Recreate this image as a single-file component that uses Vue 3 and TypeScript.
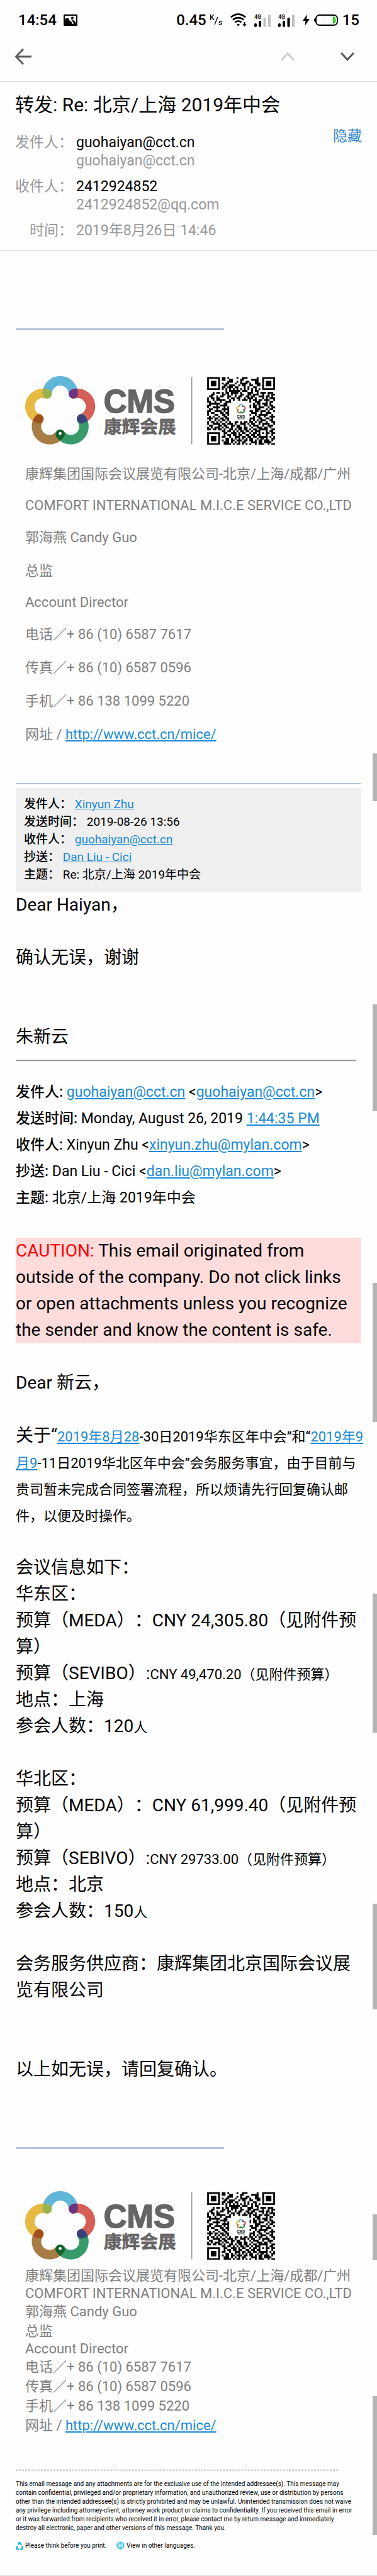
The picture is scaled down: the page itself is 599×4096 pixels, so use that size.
<script setup lang="ts">
interface SignatureLine {
  text: string
  latin?: boolean
  link?: string
}

const signature: SignatureLine[] = [
  { text: '康辉集团国际会议展览有限公司-北京/上海/成都/广州' },
  { text: 'COMFORT INTERNATIONAL M.I.C.E SERVICE CO.,LTD', latin: true },
  { text: '郭海燕 Candy Guo' },
  { text: '总监' },
  { text: 'Account Director', latin: true },
  { text: '电话／+ 86 (10) 6587 7617' },
  { text: '传真／+ 86 (10) 6587 0596' },
  { text: '手机／+ 86 138 1099 5220' },
  { text: '网址 / ', link: 'http://www.cct.cn/mice/' },
]

const petals = ['#61b5d8', '#d55f56', '#379a6a', '#a87c45', '#e7ba43']
const overlaps = ['#6a347f', '#39427b', '#0f642c', '#a0501f', '#9ab351']

const codeRows: string[] = [
  '1111111011010000100111000001001111111',
  '1000001011001100001100001111001000001',
  '1011101000011100101001100011001011101',
  '1011101010110001001111010011101011101',
  '1011101001101110010110011001101011101',
  '1000001011011101100010100110001000001',
  '1111111010101010101010101010101111111',
  '0000000000101111110111001011000000000',
  '0001011010110111101000111001011101110',
  '0011000011010101001100110111001001011',
  '0110010110011001011001101100111011010',
  '1011011000010110110010111010001010111',
  '1001011111001010010111010110110111001',
  '1100100100111000000000010011100010110',
  '0111111001100000000000000101101110100',
  '1100010111100000000000010110100110110',
  '1001111001010000000000010110111001011',
  '0110010011110000000000000011100010110',
  '1100111101010000000000011011011101001',
  '1011000110110000000000001110010011100',
  '1000110011010000000000010010111110010',
  '0101001001100000000000000101100100111',
  '1110110110110000000000011100110011010',
  '0100101011010000000000010101011100110',
  '1011010100101001101011011010110010011',
  '1001111011011101001110101100101111001',
  '0110001101100110110010010111001001110',
  '1010111010110100111011001001110110100',
  '1101101101001101011011010110111110011',
  '0000000011011010101101101011100010110',
  '1111111001100111010110010110101011011',
  '1000001001011011011001101101100010010',
  '1011101011001001110110110110111110101',
  '1011101000110101010101011001011010011',
  '1011101010110110111011011010110111010',
  '1000001001110101010110001110110111100',
  '1111111001111010110101010010111001011',
]

const codePath = codeRows
  .map((row, y) =>
    Array.from(row.matchAll(/1+/g))
      .map((run) => `M${run.index} ${y}h${run[0].length}v1h-${run[0].length}z`)
      .join(''),
  )
  .join('')

const scrollMarks = [
  { top: 1198, height: 76 },
  { top: 1597, height: 170 },
  { top: 2040, height: 221 },
  { top: 2534, height: 221 },
  { top: 3027, height: 168 },
  { top: 3521, height: 73 },
  { top: 3810, height: 221 },
]
</script>

<template>
  <div class="page">
    <svg class="defs" width="0" height="0" aria-hidden="true">
      <defs>
        <path id="arc" d="M-37.6 -52A37.6 37.6 0 0 1 37.6 -52" fill="none" stroke-width="27" stroke-linecap="round" />
        <mask v-for="n in 5" :id="`petal-mask-${n}`" :key="n" maskUnits="userSpaceOnUse" x="-110" y="-110" width="220" height="220">
          <use href="#arc" stroke="#fff" :transform="`rotate(${72 * n})`" />
        </mask>
        <g id="flower">
          <use v-for="(c, i) in petals" :key="c" href="#arc" :stroke="c" :transform="`rotate(${72 * i})`" />
          <g v-for="(c, i) in overlaps" :key="c" :mask="`url(#petal-mask-${i + 1})`">
            <use href="#arc" :stroke="c" :transform="`rotate(${72 * i})`" />
          </g>
          <ellipse cx="0" cy="62" rx="4" ry="4.5" fill="#fff" />
        </g>
        <g id="banner">
          <use href="#flower" transform="translate(100 103)" />
          <g fill="#676465" stroke="#676465" stroke-linejoin="round">
            <text x="225" y="105" class="brand" stroke-width="3">CMS</text>
            <text x="225" y="165" class="brand-cn" stroke-width="1">康辉会展</text>
          </g>
          <path d="M478 3V196" stroke="#777" stroke-width="2" />
          <g transform="translate(522 3) scale(5.27)">
            <path :d="codePath" fill="#060203" />
            <rect x="13.5" y="13.7" width="9.6" height="10" rx="1" fill="#fff" />
            <use href="#flower" transform="translate(18.4 17.3) scale(.0265)" />
            <text x="18.4" y="21.9" class="mini" text-anchor="middle">CMS</text>
            <text x="18.4" y="23" class="mini-cn" text-anchor="middle">康辉会展</text>
          </g>
        </g>
      </defs>
    </svg>

    <div class="status">
      <span>14:54</span>
      <svg class="picture" viewBox="0 0 22 18" width="22" height="18">
        <rect width="22" height="18" rx="1.5" />
        <path d="M2 2H20V14C17 8 13 8 10 8C7 5 4 5 2 8Z" fill="#fff" />
        <path d="M9 8C12 9 14 11 15 15" fill="none" stroke="#fff" stroke-width="2" />
        <circle cx="14" cy="5.5" r="2" />
      </svg>
      <div class="status-right">
        <span>0.45</span>
        <svg class="rate" viewBox="0 -6 21 30" width="21" height="30">
          <text x="0" y="9">K</text>
          <path d="M8 16L13 4" stroke="#000" stroke-width="1.4" />
          <text x="14" y="17">s</text>
        </svg>
        <svg class="wifi" viewBox="0 0 26 22" width="26" height="22">
          <g fill="none" stroke="#000" stroke-width="2.6">
            <path d="M1 6.5C8 0 17 0 24 6.5" />
            <path d="M4 10.5C9 6 16 6 21 10.5" />
            <path d="M7.500 14.500C10.500 12 14.500 12 17.500 14.500" />
          </g>
          <path d="M10 17.500Q12.500 16 15 17.500L12.500 21Z" />
          <path d="M21.500 14H23.500V17.500H26L22.500 21L19 17.500H21.500Z" />
        </svg>
        <svg v-for="bars in [2, 3]" :key="bars" class="signal" viewBox="0 -4 26 29" width="26" height="29">
          <text x="0" y="8">4G</text>
          <rect x="0" y="15" width="4" height="6" rx="2" />
          <rect x="7" y="11" width="4" height="10" rx="2" />
          <rect x="14.500" y="6" width="4" height="15" rx="2" :fill="bars > 2 ? '#000' : '#bfbfbf'" />
          <rect x="22" y="1" width="4" height="20" rx="2" fill="#bfbfbf" />
        </svg>
        <svg class="bolt" viewBox="0 0 11 18" width="11" height="18"><path d="M7 0L0 10H4.500L3.500 18L11 7H6Z" /></svg>
        <svg class="battery" viewBox="0 0 38 18" width="38" height="18">
          <rect x="3" y="1" width="34" height="16" rx="5.500" fill="none" stroke="#000" stroke-width="2" />
          <path d="M2.500 6Q0 6 0 9T2.500 12Z" />
          <path d="M30 3.500H31.500Q34.500 4 34.500 9T31.500 14.500H30Z" fill="#24d615" />
        </svg>
        <span>15</span>
      </div>
    </div>

    <nav class="toolbar">
      <button type="button" aria-label="返回">
        <svg viewBox="0 0 28 28" width="28" height="28"><path d="M14 2L2.500 14L14 26M3 14H27" fill="none" stroke="#5c5c5c" stroke-width="3" /></svg>
      </button>
      <button type="button" class="previous" aria-label="上一封" disabled>
        <svg viewBox="0 0 24 16" width="24" height="16"><path d="M2 14L12 3L22 14" fill="none" stroke="#cdcdcd" stroke-width="3" /></svg>
      </button>
      <button type="button" aria-label="下一封">
        <svg viewBox="0 0 24 16" width="24" height="16"><path d="M2 2L12 13L22 2" fill="none" stroke="#5c5c5c" stroke-width="3" /></svg>
      </button>
    </nav>

    <header class="heading">
      <h1>转发: Re: 北京/上海 2019年中会</h1>
      <div class="details">
        <dl>
          <dt>发件人：</dt>
          <dd><b>guohaiyan@cct.cn</b>guohaiyan@cct.cn</dd>
          <dt>收件人：</dt>
          <dd><b>2412924852</b>2412924852@qq.com</dd>
          <dt>时间：</dt>
          <dd>2019年8月26日 14:46</dd>
        </dl>
        <button type="button" class="hide">隐藏</button>
      </div>
    </header>

    <main>
      <hr class="accent first" />
      <section class="signature roomy">
        <svg class="banner" viewBox="0 0 720 197" role="img" aria-label="CMS 康辉会展"><use href="#banner" /></svg>
        <p v-for="line in signature" :key="line.text" :class="{ latin: line.latin }">
          {{ line.text }}<a v-if="line.link" :href="line.link">{{ line.link }}</a>
        </p>
      </section>

      <hr class="accent wide" />
      <section class="quoted">
        <p><b>发件人：</b> <a href="mailto:xinyun.zhu@mylan.com">Xinyun Zhu</a></p>
        <p><b>发送时间：</b> 2019-08-26 13:56</p>
        <p><b>收件人：</b> <a href="mailto:guohaiyan@cct.cn">guohaiyan@cct.cn</a></p>
        <p><b>抄送：</b> <a href="mailto:dan.liu@mylan.com">Dan Liu - Cici</a></p>
        <p><b>主题：</b> Re: 北京/上海 2019年中会</p>
      </section>

      <p>Dear Haiyan，</p>
      <p class="after-line">确认无误，谢谢</p>
      <p class="after-two">朱新云</p>
      <hr class="inset" />

      <section class="mail-info">
        <p><b>发件人:</b> <a href="mailto:guohaiyan@cct.cn">guohaiyan@cct.cn</a> &lt;<a href="mailto:guohaiyan@cct.cn">guohaiyan@cct.cn</a>&gt;</p>
        <p><b>发送时间:</b> Monday, August 26, 2019 <a href="#time">1:44:35 PM</a></p>
        <p><b>收件人:</b> Xinyun Zhu &lt;<a href="mailto:xinyun.zhu@mylan.com">xinyun.zhu@mylan.com</a>&gt;</p>
        <p><b>抄送:</b> Dan Liu - Cici &lt;<a href="mailto:dan.liu@mylan.com">dan.liu@mylan.com</a>&gt;</p>
        <p><b>主题:</b> 北京/上海 2019年中会</p>
      </section>

      <p class="caution after-line"><span>CAUTION:</span> This email originated from outside of the company. Do not click links or open attachments unless you recognize the sender and know the content is safe.</p>

      <p class="after-line">Dear 新云，</p>
      <p class="after-line request">关于“<span class="small"><a href="#east">2019年8月28</a>-30日2019华东区年中会”和“<a href="#north">2019年9月9</a>-11日2019华北区年中会”会务服务事宜，由于目前与贵司暂未完成合同签署流程，所以烦请先行回复确认邮件，以便及时操作。</span></p>

      <p class="after-line">会议信息如下：</p>
      <p>华东区：</p>
      <p>预算（MEDA）：CNY 24,305.80（见附件预算）</p>
      <p>预算（SEVIBO）:<span class="small">CNY 49,470.20（见附件预算）</span></p>
      <p>地点：上海</p>
      <p>参会人数：120<span class="small">人</span></p>

      <p class="after-line">华北区：</p>
      <p>预算（MEDA）：CNY 61,999.40（见附件预算）</p>
      <p>预算（SEBIVO）:<span class="small">CNY 29733.00（见附件预算）</span></p>
      <p>地点：北京</p>
      <p>参会人数：150<span class="small">人</span></p>

      <p class="after-line">会务服务供应商：康辉集团北京国际会议展览有限公司</p>
      <p class="after-two">以上如无误，请回复确认。</p>

      <hr class="accent second" />
      <section class="signature">
        <svg class="banner" viewBox="0 0 720 197" role="img" aria-label="CMS 康辉会展"><use href="#banner" /></svg>
        <p v-for="line in signature" :key="line.text" :class="{ latin: line.latin }">
          {{ line.text }}<a v-if="line.link" :href="line.link">{{ line.link }}</a>
        </p>
      </section>

      <footer class="legal">
        <hr />
        <p>
          This email message and any attachments are for the exclusive use of the intended addressee(s). This message may<br />
          contain confidential, privileged and/or proprietary information, and unauthorized review, use or distribution by persons<br />
          other than the intended addressee(s) is strictly prohibited and may be unlawful. Unintended transmission does not waive<br />
          any privilege including attorney-client, attorney work product or claims to confidentiality. If you received this email in error<br />
          or it was forwarded from recipients who received it in error, please contact me by return message and immediately<br />
          destroy all electronic, paper and other versions of this message. Thank you.
        </p>
        <div class="notes">
          <svg viewBox="0 0 24 26" width="12" height="13" fill="none" stroke="#20b4dc" stroke-width="5">
            <path d="M7 8L10 3H14L18 9M19 13L22 19L19 23H14M10 23H5L2 19L6 13" />
          </svg>
          <span>Please think before you print.</span>
          <svg class="globe" viewBox="0 0 26 28" width="13" height="14">
            <path d="M13 1A12 12 0 1 1 10 25L15 28V24" fill="#35bfe3" />
            <circle cx="13" cy="13" r="12" fill="#35bfe3" />
            <g fill="none" stroke="#d8f5fc" stroke-width="1.500"><circle cx="13" cy="13" r="8" /><ellipse cx="13" cy="13" rx="3.500" ry="8" /><path d="M5 13H21M6 9H20M6 17H20" /></g>
          </svg>
          <span>View in other languages.</span>
        </div>
      </footer>
    </main>

    <i v-for="mark in scrollMarks" :key="mark.top" class="scroll-mark" :style="{ top: `${mark.top}px`, height: `${mark.height}px` }"></i>
  </div>
</template>

<style>
body {
  margin: 0;
  background: #fefefe;
}
</style>

<style scoped>
.page {
  position: relative;
  color: #000;
  background: #fefefe;
  border-bottom: 1px solid #dcdcdc;
  font-family: Roboto, "Noto Sans CJK SC", sans-serif;
  text-spacing-trim: space-all;
}
.defs {
  position: absolute;
}
p,
h1,
dl,
dd,
hr {
  margin: 0;
}
hr {
  border: 0;
}
button {
  padding: 0;
  border: 0;
  background: none;
  font-family: inherit;
}
a {
  color: #1a8ad8;
  text-decoration: underline;
}
.status {
  display: flex;
  align-items: center;
  height: 64px;
  padding: 0 28px 0 29px;
  font-size: 24px;
  font-weight: 500;
}
.picture {
  margin-left: 11px;
}
.status-right {
  display: flex;
  align-items: center;
  margin-left: auto;
}
.rate {
  margin-left: 5px;
  font-size: 12px;
}
.wifi {
  margin-left: 12px;
}
.signal {
  margin-left: 12px;
  font-size: 9px;
}
.bolt {
  margin-left: 13px;
}
.battery {
  margin: 0 7px;
}
.toolbar {
  display: flex;
  align-items: center;
  height: 52px;
  padding: 0 35px 13px 23px;
  border-bottom: 1px solid #dcdcdc;
}
.toolbar button {
  display: flex;
}
.toolbar .previous {
  margin-left: auto;
  margin-right: 71px;
}
.heading {
  padding: 16px 24px 17px;
  border-bottom: 1px solid #e2e2e2;
}
h1 {
  font-size: 30px;
  line-height: 42px;
  font-weight: 400;
}
.details {
  display: flex;
  align-items: flex-start;
  justify-content: space-between;
  margin-top: 14px;
}
dl {
  display: grid;
  grid-template-columns: 92px auto;
  gap: 12px 5px;
  padding-top: 10px;
  color: #999;
  font-size: 23px;
  line-height: 29px;
}
dt {
  text-align: right;
}
dd b {
  display: block;
  color: #000;
  font-weight: 400;
}
.hide {
  color: #2e83cf;
  font-size: 23px;
  line-height: 29px;
}
main {
  padding: 0 25px 40px;
  font-size: 28px;
  line-height: 42px;
}
.accent {
  width: 331px;
  height: 3px;
  background: #b5c4df;
}
.accent.first {
  margin-top: 123px;
}
.accent.wide {
  width: auto;
  height: 2px;
  margin: 51px 0 6px;
}
.accent.second {
  margin-top: 102px;
}
.signature {
  padding: 67px 0 0 15px;
  color: #808080;
  font-size: 22px;
  line-height: 31px;
}
.signature .latin {
  line-height: 26px;
}
.banner {
  display: block;
  width: 399px;
  height: 109px;
  margin-bottom: 10px;
}
.roomy {
  padding-top: 73px;
  line-height: 53px;
}
.roomy .latin {
  line-height: 48px;
}
.roomy .banner {
  margin-bottom: 20px;
}
.brand {
  font: bold 92px "Liberation Sans", sans-serif;
}
.brand-cn {
  font: bold 52px "Noto Sans CJK SC", sans-serif;
}
.mini {
  font: bold 2px "Liberation Sans", sans-serif;
}
.mini-cn {
  font: 1px "Noto Sans CJK SC", sans-serif;
}
.quoted {
  padding: 12px 13px 13px;
  background: #efefef;
  font-size: 19px;
  line-height: 28px;
}
.quoted b,
.mail-info b {
  font-weight: 500;
}
.after-line {
  margin-top: 42px;
}
.after-two {
  margin-top: 84px;
}
.inset {
  height: 1px;
  margin: 15px 8px 28px 0;
  border-top: 2px solid #9a9a9a;
  background: #eee;
}
.mail-info {
  font-size: 23px;
}
.caution {
  background: #ffdcdc;
}
.caution span {
  color: #f00;
}
.request {
  margin-right: -6px;
}
.small {
  font-size: 22px;
  line-height: 22px;
}
.legal {
  margin-top: 55px;
  font-size: 10px;
  line-height: 14px;
}
.legal hr {
  width: 512px;
  margin-bottom: 15px;
  border-top: 1px dashed #222;
}
.notes {
  display: flex;
  align-items: center;
  gap: 3px;
  margin-top: 14px;
}
.globe {
  margin-left: 13px;
}
.scroll-mark {
  position: absolute;
  right: 0;
  width: 7px;
  background: #b5b5b5;
}
</style>
